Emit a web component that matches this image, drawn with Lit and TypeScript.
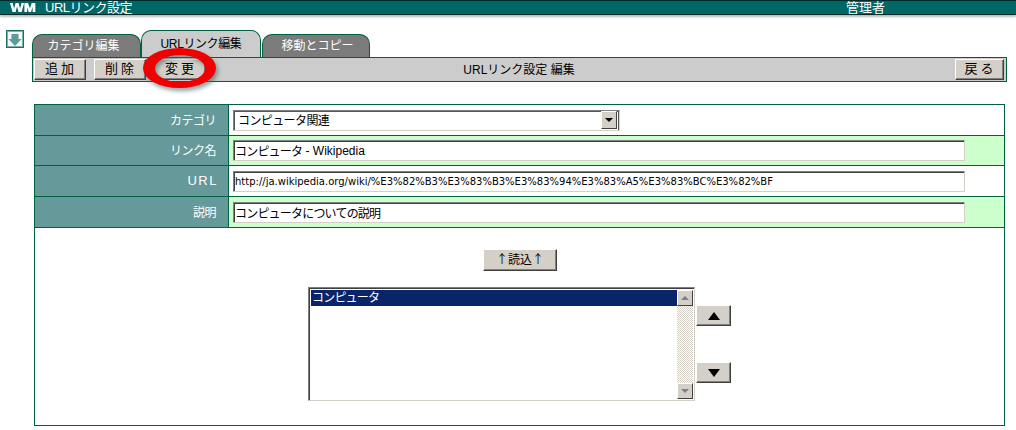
import { LitElement, html, css } from "lit";
import { customElement } from "lit/decorators.js";

@customElement("app-root")
export class AppRoot extends LitElement {
  static styles = css`
    :host { display: block; width: 1016px; height: 430px; background: #fff; overflow: hidden; position: relative; font-family: "Liberation Sans", "Noto Sans CJK JP", sans-serif; font-size: 12px; color: #000; }
    * { box-sizing: border-box; }
    .header { height: 15px; background: #006666; border-top: 1px solid #002a2a; border-bottom: 1px solid #002a2a; box-shadow: 0 2px 2px #bbb; color: #fff; display: flex; align-items: center; font-size: 13px; line-height: 13px; position: relative; }
    .logo { width: 45px; padding-left: 10px; font-size: 12px; font-weight: 700; line-height: 13px; margin-top: 2px; display: block; transform: scaleX(1.2); transform-origin: 10px 50%; text-shadow: 0.5px 0 0 #fff; }
    .title { width: 801px; margin-top: -1px; letter-spacing: -0.5px; }
    .admin { margin-top: -1px; }
    .main { display: flex; padding: 15px 0 0 6px; }
    .icon { width: 18px; height: 18px; flex: none; display: block; }
    .panel { margin-left: 8px; width: 975px; }
    .tabs { display: flex; align-items: flex-end; height: 27px; }
    .tab { height: 23px; background: #7b7b7b; color: #fff; border: 1px solid #006040; border-bottom: 0; border-radius: 10px 10px 0 0; display: flex; align-items: center; justify-content: center; width: 109px; font-size: 12px; padding: 0 6px 4px 0; }
    .tab.active { height: 27px; width: 120px; background: #cccccc; color: #000; padding: 0 0 4px 0; letter-spacing: -0.4px; }
    .tab.third { margin-left: 1px; width: 108px; padding: 0 0 4px 3px; }
    .toolbar { height: 25px; background: #cccccc; border: 1px solid #006040; display: flex; align-items: center; padding: 0 2px 0 1px; }
    .btn { height: 21px; background: #d4d0c8; border: 1px solid; border-color: #fff #404040 #404040 #fff; box-shadow: inset -1px -1px 0 #808080; display: flex; align-items: center; justify-content: center; font-size: 13px; letter-spacing: 3px; padding: 0 0 4px 2px; color: #000; }
    .w52 { width: 52px; margin-right: 8px; }
    .w49 { width: 49px; }
    .tb-title { flex: 1; text-align: center; font-size: 12px; padding: 0 131px 3px 0; }
    .table { margin: 22px 0 0 2px; width: 971px; height: 322px; border: 1px solid #006040; display: flex; flex-direction: column; }
    .row { display: grid; grid-template-columns: 194px 1fr; border-bottom: 1px solid #006040; }
    .r30 { height: 31px; }
    .r29 { height: 30px; }
    .label { background: #669999; color: #fff; padding: 0 12px 2px 0; border-right: 1px solid #006040; display: flex; align-items: center; justify-content: flex-end; font-size: 12px; letter-spacing: -0.5px; }
    .wide { letter-spacing: 1.5px; padding-right: 10px; font-size: 13px; }
    .cell { display: flex; align-items: center; padding-left: 4px; background: #fff; }
    .cell.green { background: #ccffcc; }
    .input { width: 732px; height: 21px; background: #fff; border: 1px solid; border-color: #808080 #d4d0c8 #d4d0c8 #808080; box-shadow: inset 1px 1px 0 #404040; display: flex; align-items: center; padding-left: 1px; font-size: 12px; white-space: pre; overflow: hidden; }
    .k { letter-spacing: -0.8px; }
    .url { font-family: "DejaVu Sans", sans-serif; font-size: 10px; }
    .select { width: 387px; height: 21px; background: #fff; border: 1px solid; border-color: #808080 #d4d0c8 #d4d0c8 #808080; box-shadow: inset 1px 1px 0 #555, inset -1px 0 0 #555; display: flex; align-items: center; justify-content: space-between; padding: 1px 2px 1px 4px; }
    .sel-text { letter-spacing: -0.6px; margin-top: -2px; }
    .sel-arrow { width: 16px; height: 18px; background: #d4d0c8; border: 1px solid; border-color: #fff #404040 #404040 #fff; display: flex; align-items: center; justify-content: center; }
    .tri-d { width: 0; height: 0; border-left: 4px solid transparent; border-right: 4px solid transparent; border-top: 4px solid #000; }
    .lower { flex: 1; display: flex; flex-direction: column; align-items: center; padding: 21px 0 0 0; }
    .load { width: 74px; height: 22px; font-family: "Noto Sans CJK JP", sans-serif; font-size: 12px; letter-spacing: 0; padding: 0 0 3px 0; margin-left: 1px; }
    .list-row { display: flex; margin-top: 16px; }
    .list { width: 387px; height: 114px; background: #fff; border: 1px solid; border-color: #808080 #d4d0c8 #d4d0c8 #808080; box-shadow: inset 1px 1px 0 #404040; padding: 2px 1px 1px 2px; display: flex; }
    .items { flex: 1; }
    .item { height: 16px; background: #0a246a; color: #fff; font-size: 12px; line-height: 16px; padding-left: 1px; }
    .scroll { width: 16px; display: flex; flex-direction: column; justify-content: space-between; background-color: #f0eee9; background-image: repeating-conic-gradient(#d4d0c8 0 25%, #fff 0 50%); background-size: 2px 2px; }
    .sb { width: 16px; height: 16px; background: #d4d0c8; border: 1px solid; border-color: #fff #404040 #404040 #fff; display: flex; align-items: center; justify-content: center; }
    .tri-u-g { width: 0; height: 0; border-left: 4px solid transparent; border-right: 4px solid transparent; border-bottom: 4px solid #808080; }
    .tri-d-g { width: 0; height: 0; border-left: 4px solid transparent; border-right: 4px solid transparent; border-top: 4px solid #808080; }
    .updown { width: 35px; margin-left: 1px; padding-top: 18px; display: flex; flex-direction: column; gap: 36px; }
    .ud { width: 35px; height: 21px; padding: 0; letter-spacing: 0; }
    .tri-u { width: 0; height: 0; border-left: 6px solid transparent; border-right: 6px solid transparent; border-bottom: 8px solid #000; }
    .tri-db { width: 0; height: 0; border-left: 6px solid transparent; border-right: 6px solid transparent; border-top: 8px solid #000; }
    .mark { position: absolute; left: 140px; top: 45px; width: 80px; height: 50px; overflow: visible; pointer-events: none; filter: drop-shadow(2px 3px 2px rgba(70, 100, 100, 0.6)); }
  `;

  render() {
    return html`
      <div class="header"><span class="logo">WM</span><span class="title">URLリンク設定</span><span class="admin">管理者</span></div>
      <div class="main">
        <svg class="icon" viewBox="0 0 18 18">
          <rect x="0.5" y="0.5" width="17" height="17" fill="#f2f7f7" stroke="#1f6f60" />
          <rect x="1.5" y="1.5" width="15" height="15" fill="none" stroke="#7fb0a8" />
          <path d="M5.500 4h7v5h3l-6.500 7-6.500-7h3z" fill="#5f9a9a" />
        </svg>
        <div class="panel">
          <div class="tabs">
            <div class="tab">カテゴリ編集</div>
            <div class="tab active">URLリンク編集</div>
            <div class="tab third">移動とコピー</div>
          </div>
          <div class="toolbar">
            <div class="btn w52">追加</div>
            <div class="btn w52">削除</div>
            <div class="btn w52">変更</div>
            <div class="tb-title">URLリンク設定 編集</div>
            <div class="btn w49">戻る</div>
          </div>
          <div class="table">
            <div class="row r30">
              <div class="label">カテゴリ</div>
              <div class="cell"><div class="select"><span class="sel-text">コンピュータ関連</span><div class="sel-arrow"><div class="tri-d"></div></div></div></div>
            </div>
            <div class="row r29">
              <div class="label">リンク名</div>
              <div class="cell green"><div class="input"><span class="k">コンピュータ</span> - Wikipedia</div></div>
            </div>
            <div class="row r30">
              <div class="label wide">URL</div>
              <div class="cell"><div class="input url">http://ja.wikipedia.org/wiki/%E3%82%B3%E3%83%B3%E3%83%94%E3%83%A5%E3%83%BC%E3%82%BF</div></div>
            </div>
            <div class="row r30">
              <div class="label">説明</div>
              <div class="cell green"><div class="input"><span class="k">コンピュータについての説明</span></div></div>
            </div>
            <div class="lower">
              <div class="btn load">↑読込↑</div>
              <div class="list-row">
                <div class="list">
                  <div class="items"><div class="item"><span class="k">コンピュータ</span></div></div>
                  <div class="scroll">
                    <div class="sb"><div class="tri-u-g"></div></div>
                    <div class="sb"><div class="tri-d-g"></div></div>
                  </div>
                </div>
                <div class="updown">
                  <div class="btn ud"><div class="tri-u"></div></div>
                  <div class="btn ud"><div class="tri-db"></div></div>
                </div>
              </div>
            </div>
          </div>
        </div>
      </div>
      <svg class="mark" viewBox="0 0 80 50">
        <path fill="#f00000" fill-rule="evenodd" d="M3 23a36.500 20 0 1 0 73 0a36.500 20 0 1 0-73 0zM15 23.500a25 13.500 0 1 1 50 0a25 13.500 0 1 1-50 0z" />
      </svg>
    `;
  }
}
